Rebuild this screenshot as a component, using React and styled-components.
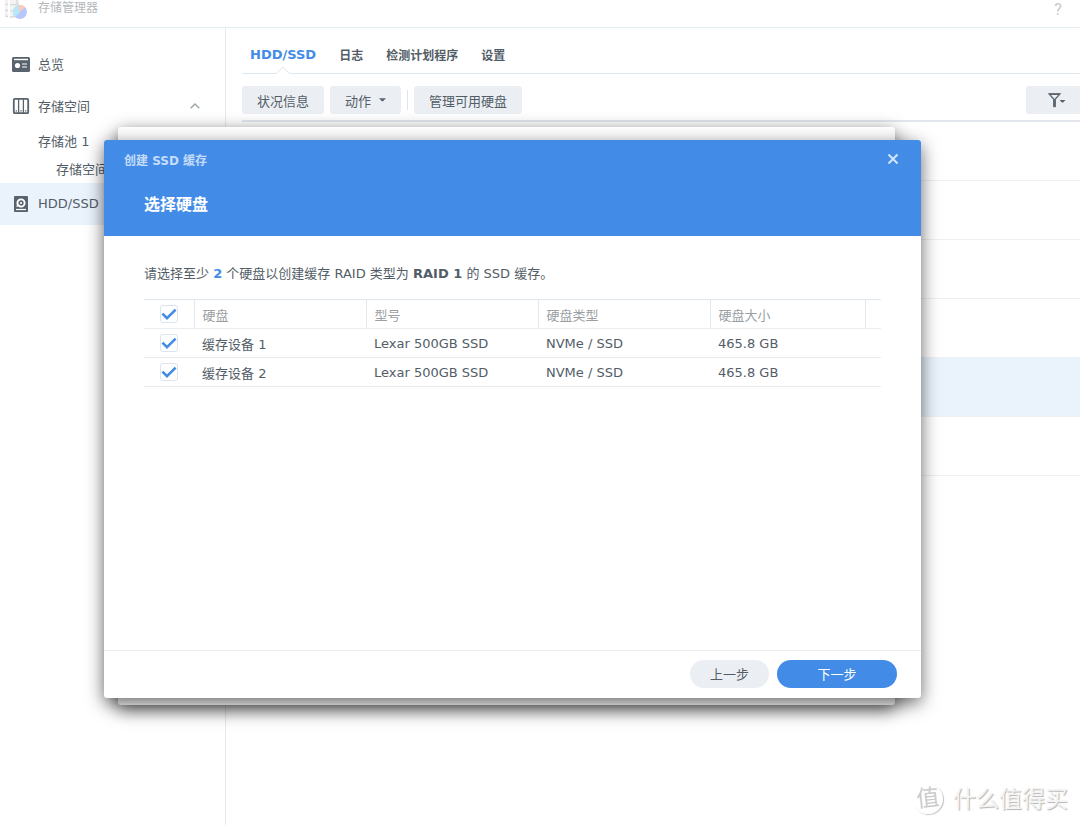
import React, { useState } from 'react';
import styled, { createGlobalStyle } from 'styled-components';

const GlobalStyle = createGlobalStyle`
  * {
    box-sizing: border-box;
  }

  body {
    margin: 0;
    background: #fff;
    color: #535d67;
    font-family: 'DejaVu Sans', 'Noto Sans CJK SC', sans-serif;
    font-size: 13px;
  }

  button {
    font: inherit;
    color: inherit;
    border: none;
    padding: 0;
    background: none;
    cursor: pointer;
  }

  svg {
    display: block;
    flex-shrink: 0;
  }
`;

const Window = styled.div`
  position: relative;
  display: flex;
  flex-direction: column;
  min-height: 100vh;
  overflow: hidden;
`;

const WindowBar = styled.header`
  display: flex;
  align-items: flex-start;
  height: 28px;
  padding: 0 14px 0 4px;
  border-bottom: 1px solid #e3ecf0;
`;

const AppName = styled.span`
  flex: 1;
  margin-left: 10px;
  font-size: 12px;
  line-height: 16px;
  color: #b4b8bc;
`;

const HelpButton = styled.button`
  width: 16px;
  font-family: Roboto, sans-serif;
  font-size: 16px;
  line-height: 19px;
  color: #c8c8c8;
`;

const Content = styled.div`
  flex: 1;
  display: flex;
`;

const Sidebar = styled.nav`
  flex: 0 0 226px;
  padding-top: 15px;
  border-right: 1px solid #e3ecf0;
`;

const NavItem = styled.a`
  display: flex;
  align-items: center;
  height: ${(props) => (props.$sub ? '28px' : '42px')};
  padding-left: ${(props) => props.$indent || 11}px;
  padding-right: 25px;
  background: ${(props) => (props.$active ? '#eaf2fc' : 'transparent')};
  color: inherit;
  text-decoration: none;
`;

const NavLabel = styled.span`
  flex: 1;
  margin-left: ${(props) => (props.$plain ? '0' : '7px')};
  padding-bottom: 1px;
`;

const Main = styled.main`
  flex: 1;
  min-width: 0;
  padding-left: 16px;
`;

const Tabs = styled.div`
  display: flex;
  gap: 23px;
  height: 46px;
  padding-left: 8px;
  border-bottom: 1px solid #dfe7ee;
`;

const Tab = styled.button`
  position: relative;
  padding-top: 8px;
  font-size: ${(props) => (props.$active ? '13px' : '12px')};
  font-weight: bold;
  color: ${(props) => (props.$active ? '#428ce8' : '#535d67')};
`;

const TabNotch = styled.svg`
  position: absolute;
  left: 50%;
  bottom: -1px;
  margin-left: -8px;
`;

const Toolbar = styled.div`
  display: flex;
  align-items: center;
  gap: 6px;
  height: 48px;
  padding-top: 6px;
  border-bottom: 2px solid #e1e7ec;
`;

const ToolButton = styled.button`
  display: flex;
  align-items: center;
  gap: 8px;
  height: 28px;
  padding: 0 15px;
  border-radius: 3px;
  background: #ebeff4;
`;

const FilterButton = styled(ToolButton)`
  width: 54px;
  margin-left: auto;
  padding: 0 0 0 21px;
  gap: 0;
  border-radius: 3px 0 0 3px;
`;

const Separator = styled.span`
  width: 1px;
  height: 20px;
  background: #dfe5ea;
`;

const DiskRow = styled.div`
  height: 59px;
  border-bottom: 1px solid #edf1f4;
  background: ${(props) => (props.$selected ? '#eaf2fc' : 'transparent')};
`;

const Panel = styled.section`
  position: absolute;
  border-radius: 3px;
  background: #fff;
  box-shadow: 0 5px 18px rgba(0, 0, 0, 0.6);
`;

const BackPanel = styled(Panel)`
  top: 127px;
  left: 118px;
  width: calc(100% - 303px);
  height: 578px;
`;

const Dialog = styled(Panel)`
  top: 140px;
  left: 104px;
  display: flex;
  flex-direction: column;
  width: calc(100% - 263px);
  height: 558px;
`;

const DialogHeader = styled.header`
  height: 96px;
  padding: 0 20px;
  border-radius: 3px 3px 0 0;
  background: #428ce8;
`;

const TitleBar = styled.div`
  display: flex;
  align-items: center;
  justify-content: space-between;
  height: 38px;
  font-size: 12px;
  font-weight: bold;
  color: #c6dcf8;
`;

const CloseButton = styled.button`
  display: grid;
  place-items: center;
  width: 16px;
  height: 16px;
`;

const StepTitle = styled.h1`
  margin: 0 20px;
  font-size: 16px;
  line-height: 54px;
  color: #fff;
`;

const DialogBody = styled.div`
  flex: 1;
  padding: 28px 40px 0;
`;

const Message = styled.p`
  margin: 0 0 15px;
  line-height: 20px;
`;

const Count = styled.strong`
  color: #428ce8;
`;

const Table = styled.table`
  width: 100%;
  table-layout: fixed;
  border-collapse: collapse;
  border-top: 1px solid #e0e8ee;
`;

const Col = styled.col`
  width: ${(props) => props.$width};
`;

const HeadCell = styled.th`
  height: 29px;
  padding: 0 8px;
  border-right: 1px solid #e3e9f0;
  border-bottom: 1px solid #e8edf2;
  font-weight: normal;
  text-align: left;
  color: #9a9fa4;

  &:last-child {
    border-right: none;
  }
`;

const Cell = styled.td`
  height: 29px;
  padding: 0 8px;
  border-bottom: 1px solid #e6ebf0;
`;

const CheckLabel = styled.label`
  position: relative;
  display: block;
  width: 18px;
  height: 18px;
  margin: 0 auto;
`;

const CheckInput = styled.input`
  appearance: none;
  display: block;
  width: 18px;
  height: 18px;
  margin: 0;
  border: 1px solid #dce5ee;
  border-radius: 3px;
  background: #fff;

  &:not(:checked) + svg {
    display: none;
  }
`;

const CheckMark = styled.svg`
  position: absolute;
  top: 0;
  left: 0;
  pointer-events: none;
`;

const DialogFooter = styled.footer`
  display: flex;
  justify-content: flex-end;
  gap: 8px;
  height: 48px;
  padding: 9px 24px 0;
  border-top: 1px solid #ececee;
`;

const StepButton = styled.button`
  width: ${(props) => (props.$primary ? '120px' : '79px')};
  height: 28px;
  padding-bottom: 2px;
  border-radius: 14px;
  background: ${(props) => (props.$primary ? '#428ce8' : '#ebeff4')};
  color: ${(props) => (props.$primary ? '#fff' : '#535d67')};
`;

const Watermark = styled.div`
  position: absolute;
  right: 12px;
  bottom: 10px;
  display: flex;
  align-items: center;
  gap: 10px;
  font-size: 23px;
  line-height: 32px;
  color: #f4f4f4;
  text-shadow: 1px 1px 1px #b4b4b4;
`;

const Seal = styled.span`
  width: 30px;
  height: 30px;
  border-radius: 50%;
  box-shadow: 1px 1px 1px #c4c4c4;
  line-height: 28px;
  text-align: center;
  color: #cbcbcb;
  text-shadow: none;
  transform: rotate(-6deg);
`;

const AppIcon = () => (
  <svg width="24" height="20" viewBox="0 0 24 20">
    <path d="M1 0h14v17q-7 2-14 0z" fill="#f3f3f3" />
    <path d="M1 4q7 2 14 0M1 10q7 2 14 0M1 16q7 2 14 0" fill="none" stroke="#d2d2d2" strokeWidth="1" />
    <path d="M5 0v17" stroke="#fff" strokeWidth="2" />
    <path d="M13 0v8" stroke="#e2e2e2" strokeWidth="2" />
    <circle cx="16" cy="12" r="7" fill="#b9c8fa" />
    <path d="M16 12V5a7 7 0 0 0-5 12z" fill="#b8e8f8" />
    <path d="M16 12L14 5.4a7 7 0 0 1 7 1.6z" fill="#fbcab8" />
  </svg>
);

const OverviewIcon = () => (
  <svg width="20" height="20" viewBox="0 0 20 20">
    <rect x="1" y="3" width="18" height="15" rx="1.5" fill="#59636d" />
    <path d="M3 5.5h14" stroke="#fff" strokeWidth="1.4" />
    <circle cx="6.5" cy="11.5" r="2.6" fill="#fff" />
    <path d="M11 10h5M11 13h5" stroke="#fff" strokeWidth="1.2" />
  </svg>
);

const VolumeIcon = () => (
  <svg width="20" height="20" viewBox="0 0 20 20">
    <rect x="2.8" y="2.8" width="14.4" height="14.4" rx="1" fill="#fff" stroke="#59636d" strokeWidth="1.8" />
    <path d="M7.6 3v14M12.4 3v14" stroke="#59636d" strokeWidth="1.3" />
    <path d="M4.6 14.8h1.4M9.3 14.8h1.4M14 14.8h1.4" stroke="#59636d" strokeWidth="1.2" />
  </svg>
);

const DiskIcon = () => (
  <svg width="20" height="20" viewBox="0 0 20 20">
    <rect x="3" y="2" width="14" height="16" rx="1" fill="#59636d" />
    <circle cx="10" cy="9" r="3.6" fill="#59636d" stroke="#fff" strokeWidth="1.9" />
    <circle cx="10" cy="9" r="1.1" fill="#fff" />
    <path d="M5.5 12.5L8 10.5" stroke="#fff" strokeWidth="1.2" />
    <path d="M5 15.5h10" stroke="#fff" strokeWidth="1.2" />
  </svg>
);

const ChevronUp = () => (
  <svg width="10" height="8" viewBox="0 0 10 8">
    <path d="M0.7 6.3L5 2l4.3 4.3" fill="none" stroke="#98a0a8" strokeWidth="1.3" />
  </svg>
);

const Caret = () => (
  <svg width="7" height="4" viewBox="0 0 7 4">
    <path d="M0 0.2h7L4.3 3q-.8.8-1.6 0z" fill="#59636d" />
  </svg>
);

const FilterIcon = () => (
  <svg width="20" height="16" viewBox="0 0 20 16">
    <path d="M1.4 1.6h12.2L8.5 7.4v7.4H6.5V7.4z" fill="#59636d" stroke="#59636d" strokeWidth="0.8" strokeLinejoin="round" />
    <path d="M3.9 3h7.2L7.5 6.9z" fill="#ebeff4" />
    <path d="M12.5 8h6l-2.2 2.2q-.8.7-1.6 0z" fill="#59636d" />
  </svg>
);

const Check = ({ label, checked, onChange }) => (
  <CheckLabel>
    <CheckInput type="checkbox" aria-label={label} checked={checked} onChange={onChange} />
    <CheckMark width="18" height="18" viewBox="0 0 18 18">
      <path d="M2.4 8.6l4.6 4.6 8.6-8.5" fill="none" stroke="#428ce8" strokeWidth="2.6" />
    </CheckMark>
  </CheckLabel>
);

const disks = [
  { name: '缓存设备 1', model: 'Lexar 500GB SSD', type: 'NVMe / SSD', size: '465.8 GB' },
  { name: '缓存设备 2', model: 'Lexar 500GB SSD', type: 'NVMe / SSD', size: '465.8 GB' },
];

const App = () => {
  const [selected, setSelected] = useState([true, true]);

  const toggle = (index) => {
    setSelected(selected.map((value, i) => (i === index ? !value : value)));
  };

  const allSelected = selected.every(Boolean);

  return (
    <Window>
      <GlobalStyle />
      <WindowBar>
        <AppIcon />
        <AppName>存储管理器</AppName>
        <HelpButton>?</HelpButton>
      </WindowBar>

      <Content>
        <Sidebar>
          <NavItem href="#overview">
            <OverviewIcon />
            <NavLabel>总览</NavLabel>
          </NavItem>
          <NavItem href="#storage">
            <VolumeIcon />
            <NavLabel>存储空间</NavLabel>
            <ChevronUp />
          </NavItem>
          <NavItem href="#pool" $sub $indent={38}>
            <NavLabel $plain>存储池 1</NavLabel>
          </NavItem>
          <NavItem href="#volume" $sub $indent={56}>
            <NavLabel $plain>存储空间 1</NavLabel>
          </NavItem>
          <NavItem href="#disks" $active>
            <DiskIcon />
            <NavLabel>HDD/SSD</NavLabel>
          </NavItem>
        </Sidebar>

        <Main>
          <Tabs>
            <Tab $active>
              HDD/SSD
              <TabNotch width="16" height="8" viewBox="0 0 16 8">
                <path d="M1 8L8 1l7 7z" fill="#fff" />
                <path d="M0.5 7.5h1L8 1l6.5 6.5h1" fill="none" stroke="#dfe7ee" />
              </TabNotch>
            </Tab>
            <Tab>日志</Tab>
            <Tab>检测计划程序</Tab>
            <Tab>设置</Tab>
          </Tabs>
          <Toolbar>
            <ToolButton>状况信息</ToolButton>
            <ToolButton>
              动作
              <Caret />
            </ToolButton>
            <Separator />
            <ToolButton>管理可用硬盘</ToolButton>
            <FilterButton aria-label="筛选">
              <FilterIcon />
            </FilterButton>
          </Toolbar>
          <DiskRow />
          <DiskRow />
          <DiskRow />
          <DiskRow />
          <DiskRow $selected />
          <DiskRow />
        </Main>
      </Content>

      <BackPanel />
      <Dialog>
        <DialogHeader>
          <TitleBar>
            <span>创建 SSD 缓存</span>
            <CloseButton aria-label="关闭">
              <svg width="12" height="12" viewBox="0 0 12 12">
                <path d="M1.5 1.5l9 9M10.5 1.5l-9 9" stroke="#d5e5fa" strokeWidth="2" />
              </svg>
            </CloseButton>
          </TitleBar>
          <StepTitle>选择硬盘</StepTitle>
        </DialogHeader>

        <DialogBody>
          <Message>
            请选择至少 <Count>2</Count> 个硬盘以创建缓存 RAID 类型为 <strong>RAID 1</strong> 的 SSD 缓存。
          </Message>
          <Table>
            <colgroup>
              <Col $width="50px" />
              <Col />
              <Col />
              <Col />
              <Col $width="155px" />
              <Col $width="16px" />
            </colgroup>
            <thead>
              <tr>
                <HeadCell>
                  <Check
                    label="全选"
                    checked={allSelected}
                    onChange={() => setSelected(selected.map(() => !allSelected))}
                  />
                </HeadCell>
                <HeadCell>硬盘</HeadCell>
                <HeadCell>型号</HeadCell>
                <HeadCell>硬盘类型</HeadCell>
                <HeadCell>硬盘大小</HeadCell>
                <HeadCell />
              </tr>
            </thead>
            <tbody>
              {disks.map((disk, index) => (
                <tr key={disk.name}>
                  <Cell>
                    <Check label={disk.name} checked={selected[index]} onChange={() => toggle(index)} />
                  </Cell>
                  <Cell>{disk.name}</Cell>
                  <Cell>{disk.model}</Cell>
                  <Cell>{disk.type}</Cell>
                  <Cell>{disk.size}</Cell>
                  <Cell />
                </tr>
              ))}
            </tbody>
          </Table>
        </DialogBody>

        <DialogFooter>
          <StepButton>上一步</StepButton>
          <StepButton $primary>下一步</StepButton>
        </DialogFooter>
      </Dialog>

      <Watermark>
        <Seal>值</Seal>
        <span>什么值得买</span>
      </Watermark>
    </Window>
  );
};

export default App;
